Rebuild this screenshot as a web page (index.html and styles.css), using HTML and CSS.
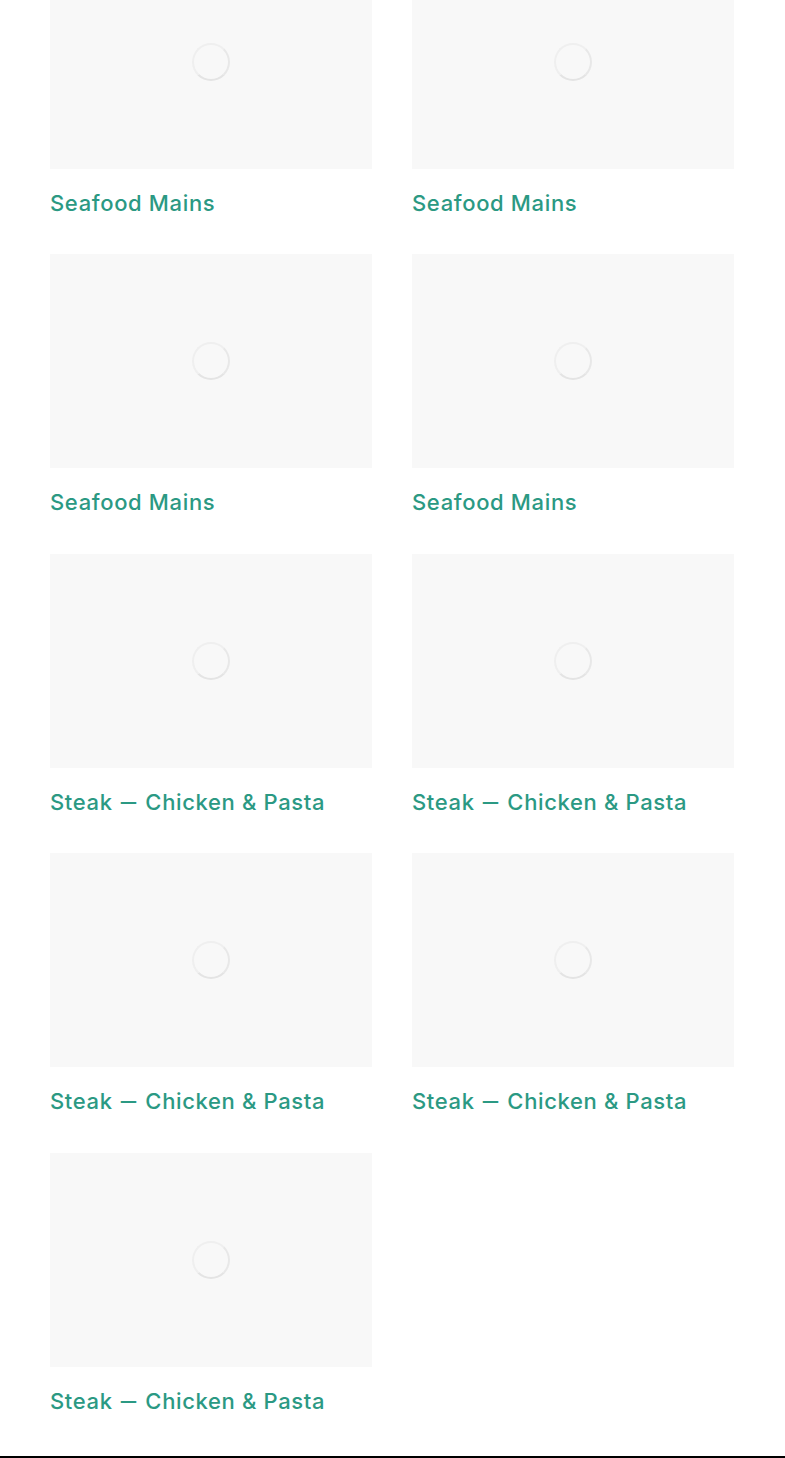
FILE: index.html
```html
<!DOCTYPE html>
<html lang="en">
<head>
<meta charset="utf-8">
<title>Menu</title>
<link rel="stylesheet" href="styles.css">
</head>
<body>
<main class="page">
  <section class="grid">
    <a class="card"><div class="thumb"><span class="spinner"></span></div><h3 class="title">Seafood Mains</h3></a>
    <a class="card"><div class="thumb"><span class="spinner"></span></div><h3 class="title">Seafood Mains</h3></a>
    <a class="card"><div class="thumb"><span class="spinner"></span></div><h3 class="title">Seafood Mains</h3></a>
    <a class="card"><div class="thumb"><span class="spinner"></span></div><h3 class="title">Seafood Mains</h3></a>
    <a class="card"><div class="thumb"><span class="spinner"></span></div><h3 class="title">Steak <span class="dash">–</span> Chicken &amp; Pasta</h3></a>
    <a class="card"><div class="thumb"><span class="spinner"></span></div><h3 class="title">Steak <span class="dash">–</span> Chicken &amp; Pasta</h3></a>
    <a class="card"><div class="thumb"><span class="spinner"></span></div><h3 class="title">Steak <span class="dash">–</span> Chicken &amp; Pasta</h3></a>
    <a class="card"><div class="thumb"><span class="spinner"></span></div><h3 class="title">Steak <span class="dash">–</span> Chicken &amp; Pasta</h3></a>
    <a class="card"><div class="thumb"><span class="spinner"></span></div><h3 class="title">Steak <span class="dash">–</span> Chicken &amp; Pasta</h3></a>
  </section>
  <div class="footer-line"></div>
</main>
</body>
</html>
```
FILE: styles.css
```css
html, body {
  margin: 0;
  padding: 0;
  background: #ffffff;
}
.page {
  margin-top: -45px;
  font-family: Inter, "Open Sans", "Liberation Sans", sans-serif;
}
.grid {
  display: grid;
  grid-template-columns: 322px 322px;
  column-gap: 40px;
  padding: 0 51px 0 50px;
}
.card {
  display: flex;
  flex-direction: column;
  height: 299.4px;
  text-decoration: none;
}
.thumb {
  height: 214px;
  background: #f8f8f8;
  display: flex;
  align-items: center;
  justify-content: center;
}
.spinner {
  width: 34px;
  height: 34px;
  border-radius: 50%;
  border: 2px solid #efefef;
  border-bottom-color: #e4e4e4;
  border-right-color: #e8e8e8;
}
.title {
  margin: 21px 0 0;
  font-size: 22px;
  line-height: 26px;
  font-weight: 500;
  color: #2b9983;
  letter-spacing: 0.65px;
}
.dash {
  display: inline-block;
  transform: scaleX(1.4);
  margin: 0 4px;
}
.footer-line {
  margin-top: 4px;
  height: 2px;
  background: #000000;
}
```
